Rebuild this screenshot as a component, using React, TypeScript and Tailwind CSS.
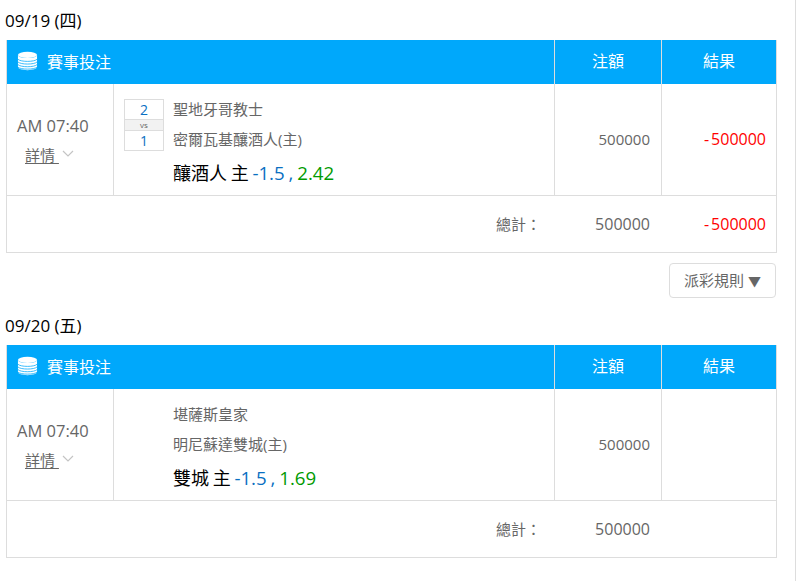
import React from 'react';

type Bet = {
  date: string;
  home: string;
  away: string;
  score?: [string, string];
  pick: string;
  handicap: string;
  odds: string;
  stake: string;
  result?: string;
};

const bets: Bet[] = [
  {
    date: '09/19 (四)',
    home: '聖地牙哥教士',
    away: '密爾瓦基釀酒人(主)',
    score: ['2', '1'],
    pick: '釀酒人 主',
    handicap: '-1.5 ,',
    odds: '2.42',
    stake: '500000',
    result: '500000',
  },
  {
    date: '09/20 (五)',
    home: '堪薩斯皇家',
    away: '明尼蘇達雙城(主)',
    pick: '雙城 主',
    handicap: '-1.5 ,',
    odds: '1.69',
    stake: '500000',
  },
];

const StackIcon = () => (
  <svg className="-mt-[2px]" width="21" height="20" viewBox="0 0 22 20" fill="none">
    <ellipse cx="11" cy="3.6" rx="10" ry="3.2" fill="#fff" />
    <path d="M1 3.6V16.4C1 18.2 5.5 19.6 11 19.6S21 18.2 21 16.4V3.6C21 5.4 16.5 6.8 11 6.8S1 5.4 1 3.6Z" fill="#fff" />
    <path d="M1 8.2C2.5 9.6 6.5 10.4 11 10.4S19.5 9.6 21 8.2M1 11C2.5 12.4 6.5 13.2 11 13.2S19.5 12.4 21 11M1 13.8C2.5 15.2 6.5 16 11 16S19.5 15.2 21 13.8M1 16.4C2.5 17.8 6.5 18.5 11 18.5S19.5 17.8 21 16.4" stroke="#00a8fb" strokeWidth="0.8" />
  </svg>
);

// the minus in the reference sits a little further from the digits
const Loss = ({ value }: { value?: string }) =>
  value ? (
    <>
      <span className="mr-[2px]">-</span>
      {value}
    </>
  ) : null;

const BetTable = ({ bet }: { bet: Bet }) => (
  <div className="ml-[6px] w-[771px] border border-[#dddddd] border-t-0">
    {/* header */}
    <div className="flex h-[44px] bg-[#00a8fb] text-white text-[16px] leading-[43px]">
      <div className="w-[547px] flex items-center pl-[10px]">
        <StackIcon />
        <span className="ml-[9px]">賽事投注</span>
      </div>
      <div className="w-[107px] border-l border-[#dddddd] text-center">注額</div>
      <div className="flex-1 border-l border-[#dddddd] text-center">結果</div>
    </div>

    {/* bet row */}
    <div className="flex h-[112px] border-b border-[#dddddd] text-[#666666]">
      <div className="w-[106px] pl-[10px] pt-[31px]">
        <div className="text-[16.5px] leading-[22px]">AM 07:40</div>
        <div className="ml-[8px] mt-[8px] flex items-center text-[15px] leading-[20px]">
          <span className="underline underline-offset-2">詳情&nbsp;</span>
          <svg className="ml-[3px] -mt-[3px]" width="12" height="7" viewBox="0 0 12 7" fill="none">
            <path d="M1 1L6 6L11 1" stroke="#c4c4c4" strokeWidth="1.2" />
          </svg>
        </div>
      </div>
      <div className="w-[441px] border-l border-[#dddddd] relative pl-[59px] pt-[14px]">
        {bet.score && (
          <div className="absolute left-[10px] top-[15px] w-[40px] border border-[#dddddd] text-center text-[#0a6fc2]">
            <div className="h-[19px] text-[14px] leading-[19px]">{bet.score[0]}</div>
            <div className="h-[12px] bg-[#f2f2f2] border-y border-[#dddddd] text-[#666666] text-[8px] leading-[10px]">vs</div>
            <div className="h-[19px] text-[14px] leading-[19px]">{bet.score[1]}</div>
          </div>
        )}
        <div className="text-[15px] leading-[22px]">{bet.home}</div>
        <div className="mt-[8px] text-[15px] leading-[22px]">{bet.away}</div>
        <div className="mt-[10px] text-[18px] leading-[26px] text-black [word-spacing:-1px]">
          {bet.pick}{' '}
          <span className="text-[18.7px]">
            <span className="text-[#0a6fc2]">{bet.handicap}</span>{' '}
            <span className="text-[#009a00]">{bet.odds}</span>
          </span>
        </div>
      </div>
      <div className="w-[107px] border-l border-[#dddddd] pr-[11px] text-right text-[15px] leading-[111px]">{bet.stake}</div>
      <div className="flex-1 border-l border-[#dddddd] pr-[10px] text-right text-[16px] leading-[111px] text-[#ff0000]">
        <Loss value={bet.result} />
      </div>
    </div>

    {/* total row */}
    <div className="flex h-[56px] text-[#666666] leading-[56px]">
      <div className="w-[547px] pr-[13px] text-right text-[15px]">總計：</div>
      <div className="w-[108px] pr-[12px] text-right text-[16px]">{bet.stake}</div>
      <div className="flex-1 pr-[10px] text-right text-[16px] text-[#ff0000]">
        <Loss value={bet.result} />
      </div>
    </div>
  </div>
);

export default function App() {
  return (
    <div
      className="h-[581px] w-[796px] overflow-hidden bg-white border-r border-[#dddddd]"
      style={{ fontFamily: '"Open Sans", "Noto Sans CJK TC", sans-serif' }}
    >
      <div className="pl-[5px] pt-[9px] h-[40px] text-[17px] leading-[24px] text-black">{bets[0].date}</div>
      <BetTable bet={bets[0]} />
      <div className="flex justify-end pr-[19px] pt-[10px]">
        <button className="h-[35px] w-[107px] rounded border border-[#dddddd] bg-white text-[15px] text-[#666666]">
          派彩規則 <span className="text-[13px]">▼</span>
        </button>
      </div>
      <div className="pl-[5px] pt-[16px] h-[47px] text-[17px] leading-[24px] text-black">{bets[1].date}</div>
      <BetTable bet={bets[1]} />
    </div>
  );
}
